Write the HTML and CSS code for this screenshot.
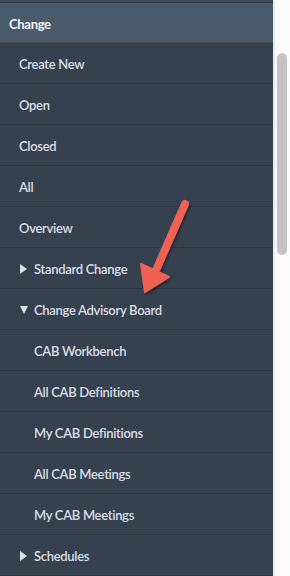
FILE: index.html
```html
<!DOCTYPE html>
<html>
<head>
<meta charset="utf-8">
<link rel="stylesheet" href="styles.css">
</head>
<body>
<div class="frame">
  <nav class="nav">
    <div class="top-strip"></div>
    <div class="header">Change</div>
    <ul class="menu">
      <li class="item l1">Create New</li>
      <li class="item l1">Open</li>
      <li class="item l1">Closed</li>
      <li class="item l1">All</li>
      <li class="item l1">Overview</li>
      <li class="item l1 group"><span class="tri right"></span>Standard Change</li>
      <li class="item l1 group"><span class="tri down"></span>Change Advisory Board</li>
      <li class="item l2">CAB Workbench</li>
      <li class="item l2">All CAB Definitions</li>
      <li class="item l2">My CAB Definitions</li>
      <li class="item l2">All CAB Meetings</li>
      <li class="item l2">My CAB Meetings</li>
      <li class="item l1 group"><span class="tri right"></span>Schedules</li>
    </ul>
    <svg class="arrow" width="273" height="576" viewBox="0 0 273 576">
      <defs>
        <filter id="sh" x="-20%" y="-20%" width="140%" height="140%">
          <feDropShadow dx="1" dy="2" stdDeviation="1.5" flood-color="#000" flood-opacity="0.45"/>
        </filter>
      </defs>
      <g filter="url(#sh)" fill="#ee6252" stroke="#ee6252">
        <line x1="185" y1="204" x2="157" y2="268" stroke-width="8" stroke-linecap="round"/>
        <polygon points="141,264 169,277 145,292" stroke-width="2" stroke-linejoin="round"/>
      </g>
    </svg>
  </nav>
  <div class="gutter">
    <div class="thumb"></div>
  </div>
</div>
</body>
</html>
```
FILE: styles.css
```css
* { box-sizing: border-box; }
html, body { margin: 0; padding: 0; }
body {
  width: 290px;
  height: 576px;
  overflow: hidden;
  background: #fdfdfd;
  font-family: Lato, "Open Sans", sans-serif;
}
.frame {
  display: flex;
  height: 576px;
}
.nav {
  position: relative;
  width: 273px;
  background: #36414f;
  overflow: hidden;
}
.top-strip {
  height: 3px;
  background: #3d4a59;
  border-bottom: 1px solid #2f3a46;
}
.header {
  height: 40px;
  background: #4b5a6b;
  color: #f1f4f7;
  font-size: 13px;
  font-weight: 700;
  letter-spacing: -0.3px;
  padding: 3px 0 0 9px;
  display: flex;
  align-items: center;
  border-bottom: 1px solid #3f4d5c;
}
.menu {
  list-style: none;
  margin: 0;
  padding: 0;
}
.item {
  height: 41px;
  display: flex;
  align-items: center;
  color: #d9dfe6;
  font-size: 13px;
  font-weight: 600;
  letter-spacing: -0.3px;
  padding-top: 2px;
  border-bottom: 1px solid #2d3742;
}
.l1 { padding-left: 19px; }
.l2 { padding-left: 34px; }
.group { padding-left: 20px; }
.tri {
  width: 0;
  height: 0;
  margin-right: 8px;
}
.tri.right {
  border-top: 5px solid transparent;
  border-bottom: 5px solid transparent;
  border-left: 7px solid #d9dfe6;
  margin-right: 7px;
}
.tri.down {
  border-left: 4.5px solid transparent;
  border-right: 4.5px solid transparent;
  border-top: 8px solid #d9dfe6;
  margin-right: 6px;
}
.arrow {
  position: absolute;
  left: 0;
  top: 0;
  pointer-events: none;
}
.gutter {
  width: 17px;
  background: #fbfbfb;
  border-left: 2px solid #e4ebf4;
  padding-left: 2px;
}
.thumb {
  margin-top: 53px;
  width: 10px;
  height: 202px;
  border-radius: 5px;
  background: #c4c4c4;
}
```
